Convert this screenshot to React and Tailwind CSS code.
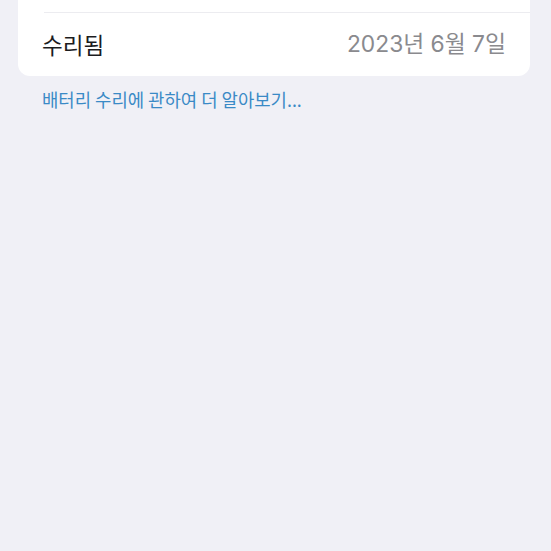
export default function App() {
  return (
    <div
      className="flow-root min-h-screen w-full bg-[#f0f0f6]"
      style={{ fontFamily: '"Noto Sans CJK KR", "Noto Sans", sans-serif' }}
    >
      <div className="px-[18px] pr-[21px]">
        {/* card, its upper row is scrolled off the top */}
        <div className="mt-[-32px] rounded-[12px] bg-white">
          <div className="h-[44px]" />
          <div className="ml-[26px] h-px bg-[#ececf0]" />
          <div className="flex h-[63px] items-center justify-between pl-[24px] pr-[24px]">
            <span className="text-[22.5px] text-[#1c1c1e]">수리됨</span>
            <span className="font-['Inter','Noto_Sans_CJK_KR',sans-serif] text-[22.8px] text-[#8a8a8e]">
              2023년 6월 7일
            </span>
          </div>
        </div>
        <p className="mt-[10px] pl-[24px] text-[17.8px] text-[#3a8ac6]">
          배터리 수리에 관하여 더 알아보기...
        </p>
      </div>
    </div>
  );
}
